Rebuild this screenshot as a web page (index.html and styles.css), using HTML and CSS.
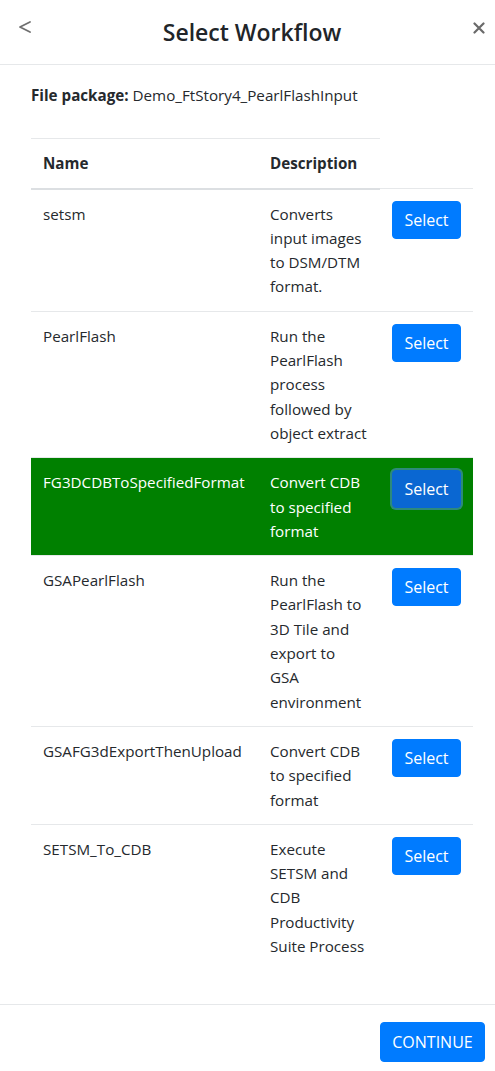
FILE: index.html
```html
<!DOCTYPE html>
<html lang="en">
<head>
<meta charset="utf-8">
<title>Select Workflow</title>
<link rel="stylesheet" href="styles.css">
</head>
<body>
<div class="modal">
  <header class="modal-header">
    <button class="icon-btn back" aria-label="Back">
      <svg width="14" height="14" viewBox="0 0 14 14"><path d="M12 2 L2 7 L12 12" fill="none" stroke="#6f6f6f" stroke-width="1.8" stroke-linecap="round" stroke-linejoin="round"/></svg>
    </button>
    <h1 class="title">Select Workflow</h1>
    <button class="icon-btn close" aria-label="Close">
      <svg width="12" height="12" viewBox="0 0 12 12"><path d="M1.5 1.5 L10.5 10.5 M10.5 1.5 L1.5 10.5" fill="none" stroke="#6a6a6a" stroke-width="2.2" stroke-linecap="round"/></svg>
    </button>
  </header>
  <main class="modal-body">
    <p class="package"><strong>File package:</strong> Demo_FtStory4_PearlFlashInput</p>
    <table class="wf-table">
      <colgroup>
        <col class="c-name">
        <col class="c-desc">
        <col class="c-act">
      </colgroup>
      <thead>
        <tr><th>Name</th><th>Description</th></tr>
      </thead>
      <tbody>
        <tr><td>setsm</td><td class="desc">Converts input images to DSM/DTM format.</td><td><button class="btn">Select</button></td></tr>
        <tr><td>PearlFlash</td><td class="desc">Run the PearlFlash process followed by object extract</td><td><button class="btn">Select</button></td></tr>
        <tr class="selected"><td>FG3DCDBToSpecifiedFormat</td><td class="desc">Convert CDB to specified format</td><td><button class="btn active">Select</button></td></tr>
        <tr><td>GSAPearlFlash</td><td class="desc">Run the PearlFlash to 3D Tile and export to GSA environment</td><td><button class="btn">Select</button></td></tr>
        <tr><td>GSAFG3dExportThenUpload</td><td class="desc">Convert CDB to specified format</td><td><button class="btn">Select</button></td></tr>
        <tr><td>SETSM_To_CDB</td><td class="desc">Execute SETSM and CDB Productivity Suite Process</td><td><button class="btn">Select</button></td></tr>
      </tbody>
    </table>
  </main>
  <footer class="modal-footer">
    <button class="btn continue">CONTINUE</button>
  </footer>
</div>
</body>
</html>
```
FILE: styles.css
```css
* { box-sizing: border-box; }
html, body { margin: 0; padding: 0; background: #fff; }
body {
  font-family: "Open Sans", "Noto Sans", sans-serif;
  font-size: 15.2px;
  line-height: 24.3px;
  color: #25292d;
}
.modal { width: 495px; }
.modal-header {
  height: 65px;
  display: flex;
  align-items: center;
  justify-content: space-between;
  border-bottom: 1px solid #e6e8ea;
  padding: 0 9px 0 18px;
}
.icon-btn {
  background: none;
  border: 0;
  padding: 0;
  width: 14px;
  height: 14px;
  display: flex;
  align-items: center;
  justify-content: center;
  cursor: pointer;
}
.icon-btn.back { margin-top: -10px; }
.icon-btn.close { margin-top: -8px; }
.title {
  margin: 0;
  font-size: 23px;
  font-weight: 600;
  line-height: 30px;
  color: #212529;
}
.modal-body { padding: 18px 22px 17px 31px; }
.package { margin: 0 0 31px; }
.package strong { font-weight: 700; }
.wf-table {
  width: 442px;
  table-layout: fixed;
  border-collapse: collapse;
  margin-bottom: 17px;
}
.c-name { width: 227px; }
.c-desc { width: 122px; }
.c-act { width: 93px; }
.wf-table th, .wf-table td {
  padding: 12px;
  vertical-align: top;
  text-align: left;
}
.wf-table td.desc { padding-right: 13px; }
.wf-table th {
  font-weight: 700;
  border-top: 1px solid #e6e8ea;
  border-bottom: 2px solid #dcdfe2;
}
.wf-table td { border-top: 1px solid #e6e8ea; }
.wf-table tr.selected td { background: #008000; color: #fff; }
.btn {
  font: inherit;
  font-size: 16px;
  line-height: 24px;
  background: #007bff;
  color: #fff;
  border: 1px solid #007bff;
  border-radius: 4px;
  padding: 6px 0;
  width: 69px;
  cursor: pointer;
  text-align: center;
}
.btn.active {
  background: #0a67d2;
  border-color: #0a67d2;
  box-shadow: 0 0 0 2px #2d8a7a;
}
.modal-footer {
  border-top: 1px solid #e6e8ea;
  padding: 17px 10px 16px;
  display: flex;
  justify-content: flex-end;
}
.btn.continue { width: 105px; padding: 7px 0; }
```
